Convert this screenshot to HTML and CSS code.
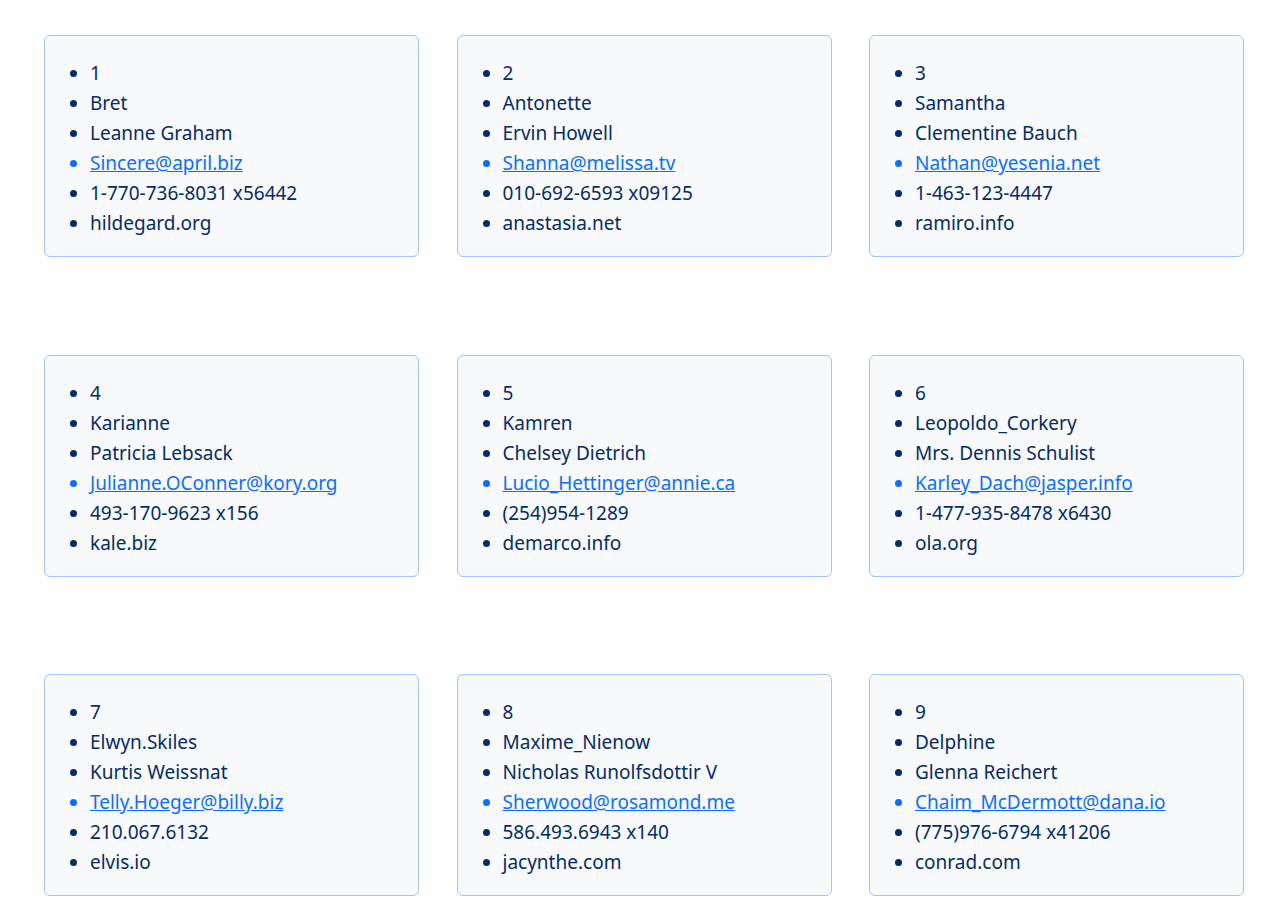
FILE: index.html
```html
<!DOCTYPE html>
<html>
<head>
<meta charset="utf-8">
<link rel="stylesheet" href="styles.css">
</head>
<body>
<div class="grid">
  <div class="card"><ul><li>1</li><li>Bret</li><li>Leanne Graham</li><li class="mail"><a href="#">Sincere@april.biz</a></li><li>1-770-736-8031 x56442</li><li>hildegard.org</li></ul></div>
  <div class="card"><ul><li>2</li><li>Antonette</li><li>Ervin Howell</li><li class="mail"><a href="#">Shanna@melissa.tv</a></li><li>010-692-6593 x09125</li><li>anastasia.net</li></ul></div>
  <div class="card"><ul><li>3</li><li>Samantha</li><li>Clementine Bauch</li><li class="mail"><a href="#">Nathan@yesenia.net</a></li><li>1-463-123-4447</li><li>ramiro.info</li></ul></div>
  <div class="card"><ul><li>4</li><li>Karianne</li><li>Patricia Lebsack</li><li class="mail"><a href="#">Julianne.OConner@kory.org</a></li><li>493-170-9623 x156</li><li>kale.biz</li></ul></div>
  <div class="card"><ul><li>5</li><li>Kamren</li><li>Chelsey Dietrich</li><li class="mail"><a href="#">Lucio_Hettinger@annie.ca</a></li><li>(254)954-1289</li><li>demarco.info</li></ul></div>
  <div class="card"><ul><li>6</li><li>Leopoldo_Corkery</li><li>Mrs. Dennis Schulist</li><li class="mail"><a href="#">Karley_Dach@jasper.info</a></li><li>1-477-935-8478 x6430</li><li>ola.org</li></ul></div>
  <div class="card"><ul><li>7</li><li>Elwyn.Skiles</li><li>Kurtis Weissnat</li><li class="mail"><a href="#">Telly.Hoeger@billy.biz</a></li><li>210.067.6132</li><li>elvis.io</li></ul></div>
  <div class="card"><ul><li>8</li><li>Maxime_Nienow</li><li>Nicholas Runolfsdottir V</li><li class="mail"><a href="#">Sherwood@rosamond.me</a></li><li>586.493.6943 x140</li><li>jacynthe.com</li></ul></div>
  <div class="card"><ul><li>9</li><li>Delphine</li><li>Glenna Reichert</li><li class="mail"><a href="#">Chaim_McDermott@dana.io</a></li><li>(775)976-6794 x41206</li><li>conrad.com</li></ul></div>
</div>
</body>
</html>
```
FILE: styles.css
```css
html, body {
  margin: 0;
  padding: 0;
  background: #ffffff;
}
body {
  font-family: "Noto Sans", "Open Sans", sans-serif;
  font-size: 19px;
  color: #052c65;
}
.grid {
  display: grid;
  grid-template-columns: repeat(3, 375px);
  column-gap: 37.5px;
  row-gap: 97.5px;
  padding: 35px 0 0 44px;
}
.card {
  background: #f8f9fa;
  border: 1px solid #9ec5fe;
  border-radius: 6px;
  height: 222px;
  box-sizing: border-box;
  padding: 22px 13px 0 13px;
}
.card ul {
  margin: 0;
  padding-left: 32px;
}
.card li {
  line-height: 30px;
  height: 30px;
}
.card li.mail {
  color: #0d6efd;
}
.card li.mail a {
  color: #0d6efd;
  text-decoration: underline;
}
```
